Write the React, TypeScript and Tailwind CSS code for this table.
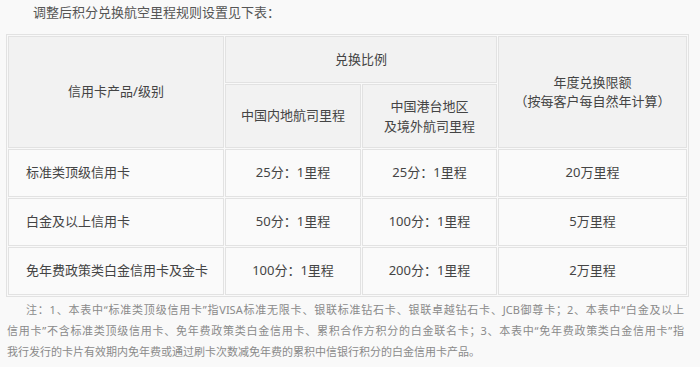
import React from "react";

const font = { fontFamily: '"Noto Sans", "Noto Sans CJK SC", sans-serif' };

export default function App() {
  const th = "border border-[#e2e2e2] bg-[#f2f2f2] text-center font-normal align-middle p-0";
  const td = "border border-[#e2e2e2] bg-[#fafafa] text-center align-middle p-0";
  const rows = [
    ["标准类顶级信用卡", "25分：1里程", "25分：1里程", "20万里程"],
    ["白金及以上信用卡", "50分：1里程", "100分：1里程", "5万里程"],
    ["免年费政策类白金信用卡及金卡", "100分：1里程", "200分：1里程", "2万里程"],
  ];
  return (
    <div className="w-[700px] h-[367px] bg-[#f9f9f9] overflow-hidden text-[#444]" style={font}>
      <div className="pl-[33px] h-[24px] text-[13px] leading-[24px] text-[#555]">
        调整后积分兑换航空里程规则设置见下表：
      </div>
      <div className="h-[10px]" />
      <table className="ml-[6px] w-[683px] table-fixed border-separate border-spacing-[1px] border border-[#e2e2e2] text-[13px] text-[#444]">
        <colgroup>
          <col className="w-[216px]" />
          <col className="w-[136px]" />
          <col className="w-[135px]" />
          <col className="w-[189px]" />
        </colgroup>
        <tbody>
          <tr className="h-[47px]">
            <th rowSpan={2} className={th}>信用卡产品/级别</th>
            <th colSpan={2} className={th}>兑换比例</th>
            <th rowSpan={2} className={`${th} leading-[19px]`}>
              年度兑换限额
              <br />
              （按每客户每自然年计算）
            </th>
          </tr>
          <tr className="h-[64px]">
            <th className={th}>中国内地航司里程</th>
            <th className={`${th} leading-[20px]`}>
              中国港台地区
              <br />
              及境外航司里程
            </th>
          </tr>
          {rows.map((r) => (
            <tr key={r[0]} className="h-[48px]">
              <td className={`${td} !text-left pl-[17px]`}>{r[0]}</td>
              <td className={td}>{r[1]}</td>
              <td className={td}>{r[2]}</td>
              <td className={td}>{r[3]}</td>
            </tr>
          ))}
        </tbody>
      </table>
      <div className="mt-[2px] pl-[7px] w-[684px] text-[11px] leading-[21px] text-[#8a8a8a]">
        <div className="whitespace-nowrap text-justify [text-align-last:justify] indent-[19px]">
          注：1、本表中“标准类顶级信用卡”指VISA标准无限卡、银联标准钻石卡、银联卓越钻石卡、JCB御尊卡；2、本表中“白金及以上
        </div>
        <div className="whitespace-nowrap text-justify [text-align-last:justify]">
          信用卡”不含标准类顶级信用卡、免年费政策类白金信用卡、累积合作方积分的白金联名卡；3、本表中“免年费政策类白金信用卡”指
        </div>
        <div className="whitespace-nowrap">
          我行发行的卡片有效期内免年费或通过刷卡次数减免年费的累积中信银行积分的白金信用卡产品。
        </div>
      </div>
    </div>
  );
}
